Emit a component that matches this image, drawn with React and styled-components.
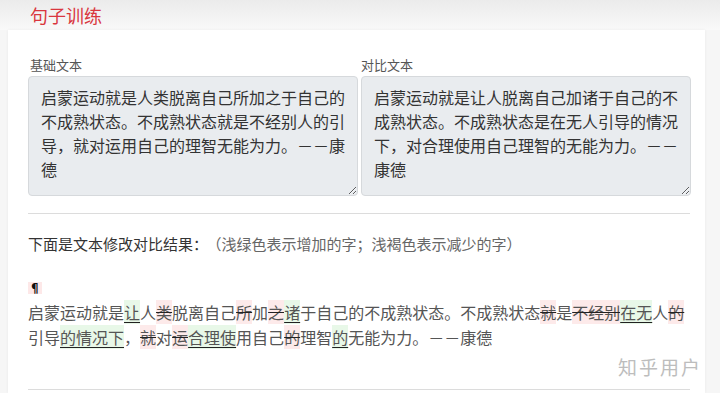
import React from 'react';
import styled, { createGlobalStyle } from 'styled-components';

const baseText =
  '启蒙运动就是人类脱离自己所加之于自己的不成熟状态。不成熟状态就是不经别人的引导，就对运用自己的理智无能为力。－－康德';
const compareText =
  '启蒙运动就是让人脱离自己加诸于自己的不成熟状态。不成熟状态是在无人引导的情况下，对合理使用自己理智的无能为力。－－康德';

// [type, text]: '' unchanged, '+' added, '-' removed
const diff = [
  ['', '启蒙运动就是'],
  ['+', '让'],
  ['', '人'],
  ['-', '类'],
  ['', '脱离自己'],
  ['-', '所'],
  ['', '加'],
  ['-', '之'],
  ['+', '诸'],
  ['', '于自己的不成熟状态。不成熟状态'],
  ['-', '就'],
  ['', '是'],
  ['-', '不经别'],
  ['+', '在无'],
  ['', '人'],
  ['-', '的'],
  ['', '引导'],
  ['+', '的情况下'],
  ['', '，'],
  ['-', '就'],
  ['', '对'],
  ['-', '运'],
  ['+', '合理使'],
  ['', '用自己'],
  ['-', '的'],
  ['', '理智'],
  ['+', '的'],
  ['', '无能为力。－－康德'],
];

const GlobalStyle = createGlobalStyle`
  html, body {
    margin: 0;
    padding: 0;
    background: #f6f6f6;
    font-family: "Noto Sans CJK SC", "Noto Sans", sans-serif;
    overflow: hidden;
  }
`;

const Page = styled.div`
  width: 720px;
  height: 393px;
  position: relative;
  overflow: hidden;
`;

const Header = styled.div`
  height: 30px;
  padding-left: 30px;
  background: linear-gradient(#ebebeb, #f9f9f9);
  display: flex;
  align-items: center;
`;

const Title = styled.h1`
  margin: 0;
  font-size: 18px;
  font-weight: 400;
  color: #d9363e;
  line-height: 1;
`;

const Card = styled.div`
  width: 697px;
  margin-left: 8px;
  background: #fff;
  box-shadow: 0 0 3px rgba(0, 0, 0, 0.06);
  padding: 26px 15px 0 20px;
  box-sizing: border-box;
  height: 363px;
`;

const Columns = styled.div`
  display: grid;
  grid-template-columns: 330px 330px;
  column-gap: 3px;
`;

const Field = styled.div`
  display: flex;
  flex-direction: column;
`;

const Label = styled.label`
  font-size: 13px;
  color: #555;
  line-height: 18px;
  padding-left: ${({ $indent }) => $indent || 0}px;
  margin-bottom: 2px;
`;

const TextBox = styled.textarea`
  height: 120px;
  box-sizing: border-box;
  padding: 8px 12px;
  border: 1px solid #d6d9dc;
  border-radius: 4px;
  background: #e9ecef;
  color: #333;
  font-family: "Noto Sans CJK SC", "Noto Sans", sans-serif;
  font-size: 16px;
  line-height: 24px;
  outline: none;
`;

const Rule = styled.hr`
  border: 0;
  border-top: 1px solid #dcdcdc;
  margin: ${({ $top }) => $top}px 0 0;
  width: 662px;
`;

const ResultTitle = styled.p`
  margin: 19px 0 0;
  font-size: 15px;
  line-height: 22px;
  color: #333;
`;

const Hint = styled.span`
  color: #666;
  margin-left: 6px;
`;

const Pilcrow = styled.div`
  margin-top: 27px;
  display: inline-block;
  font-size: 12px;
  line-height: 12px;
  font-weight: 700;
  color: #111;
  background: #fde8e8;
  padding: 0 1px;
`;

const DiffText = styled.p`
  margin: 2px 0 0;
  width: 662px;
  font-size: 16px;
  line-height: 25px;
  color: #555;
`;

const Added = styled.span`
  background: #e8f8e8;
  text-decoration: underline;
  text-decoration-color: #222;
  text-underline-offset: 3px;
`;

const Removed = styled.span`
  background: #fdeaea;
  text-decoration: line-through;
  text-decoration-color: #222;
`;

const Watermark = styled.div`
  position: absolute;
  right: 18px;
  bottom: 13px;
  font-size: 19px;
  letter-spacing: 2px;
  color: #bdbdbd;
`;

const App = () => (
  <Page>
    <GlobalStyle />
    <Header>
      <Title>句子训练</Title>
    </Header>
    <Card>
      <Columns>
        <Field>
          <Label $indent={2}>基础文本</Label>
          <TextBox readOnly value={baseText} />
        </Field>
        <Field>
          <Label>对比文本</Label>
          <TextBox readOnly value={compareText} />
        </Field>
      </Columns>
      <Rule $top={17} />
      <ResultTitle>
        下面是文本修改对比结果：
        <Hint>（浅绿色表示增加的字；浅褐色表示减少的字）</Hint>
      </ResultTitle>
      <Pilcrow>¶</Pilcrow>
      <DiffText>
        {diff.map(([type, text], i) => {
          if (type === '+') return <Added key={i}>{text}</Added>;
          if (type === '-') return <Removed key={i}>{text}</Removed>;
          return <span key={i}>{text}</span>;
        })}
      </DiffText>
      <Rule $top={39} />
    </Card>
    <Watermark>知乎用户</Watermark>
  </Page>
);

export default App;
